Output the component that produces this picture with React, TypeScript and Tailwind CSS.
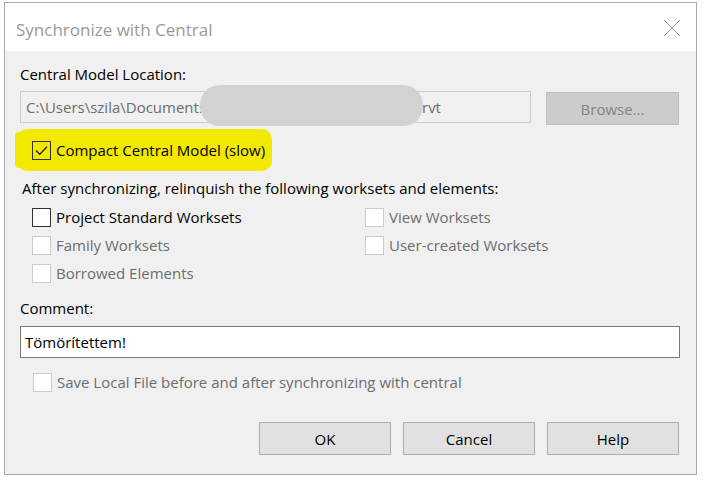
import React from 'react';

const font = { fontFamily: '"Open Sans", "Noto Sans", Arial, sans-serif' };

const CheckBox = ({ checked = false, disabled = false }: { checked?: boolean; disabled?: boolean }) => (
  <span
    className={`w-[19px] h-[19px] shrink-0 flex items-center justify-center border ${
      disabled ? 'border-[#cccccc] bg-white' : checked ? 'border-[#333333]' : 'border-[#333333] bg-white'
    }`}
  >
    {checked && (
      <svg width="15" height="15" viewBox="0 0 15 15">
        <path d="M2 7.5 L5.8 11.3 L13 3.8" fill="none" stroke="#222" strokeWidth="1.3" />
      </svg>
    )}
  </span>
);

const Option = ({ label, disabled = false }: { label: string; disabled?: boolean }) => (
  <div className="flex items-center gap-[5px] h-[20px]">
    <CheckBox disabled={disabled} />
    <span className={disabled ? 'text-[#6d6d6d]' : 'text-black'}>{label}</span>
  </div>
);

const Button = ({ label }: { label: string }) => (
  <button className="w-[132px] h-[33px] bg-[#e1e1e1] border border-[#adadad] text-black">{label}</button>
);

export default function App() {
  return (
    <div className="w-[703px] h-[481px] bg-white pl-[4px] pt-[2px]" style={font}>
      <div className="w-[693px] h-[473px] border border-[#a9a9a9] flex flex-col text-[15px] leading-[20px]">
        {/* title bar */}
        <div className="h-[48px] bg-white flex items-center justify-between pl-[11px] pr-[15px] shrink-0">
          <span className="text-[17px] text-[#999999] mb-[-6px]">Synchronize with Central</span>
          <svg width="18" height="18" viewBox="0 0 18 18" className="mb-[-2px]">
            <path d="M1 1 L17 17 M17 1 L1 17" stroke="#999" strokeWidth="1" />
          </svg>
        </div>

        <div className="flex-1 bg-[#f0f0f0] pl-[15px] pr-[17px] flex flex-col">
          <div className="mt-[13px] text-black">Central Model Location:</div>

          <div className="mt-[7px] flex items-start gap-[15px]">
            <div className="relative w-[511px] h-[32px] border border-[#cccccc] bg-[#f0f0f0] flex items-center pl-[5px] text-[#6d6d6d]">
              <span className="whitespace-nowrap">C:\Users\szila\Documents\</span>
              <span className="absolute left-[401px] top-0 bottom-0 flex items-center">rvt</span>
              {/* privacy scribble over the path */}
              <span className="absolute left-[179px] top-[-7px] w-[223px] h-[41px] bg-[#d1d2d3] rounded-[20px]" />
            </div>
            <button className="w-[133px] h-[33px] mt-[1px] bg-[#cccccc] border border-[#bfbfbf] text-[#838383]">
              Browse...
            </button>
          </div>

          <div className="relative mt-[15px] h-[20px] flex items-center gap-[5px] pl-[12px]">
            <span className="absolute left-[-3px] top-[-11px] w-[255px] h-[42px] bg-[#f3e800] rounded-[10px]" />
            <span className="absolute left-[-5px] top-[-8px] w-[8px] h-[36px] bg-[#f3e800] rounded-[4px]" />
            <span className="relative flex items-center gap-[5px]">
              <CheckBox checked />
              <span className="text-black">Compact Central Model (slow)</span>
            </span>
          </div>

          <div className="mt-[18px] pl-[2px] text-black">
            After synchronizing, relinquish the following worksets and elements:
          </div>

          <div className="mt-[9px] pl-[12px] grid grid-cols-[333px_1fr] gap-y-[8px]">
            <Option label="Project Standard Worksets" />
            <Option label="View Worksets" disabled />
            <Option label="Family Worksets" disabled />
            <Option label="User-created Worksets" disabled />
            <Option label="Borrowed Elements" disabled />
          </div>

          <div className="mt-[15px] text-black">Comment:</div>

          <div className="mt-[8px] w-[660px] h-[32px] border border-[#7a7a7a] bg-white flex items-center pl-[4px] text-black">
            Tömörítettem!
          </div>

          <div className="mt-[14px] pl-[13px]">
            <Option label="Save Local File before and after synchronizing with central" disabled />
          </div>

          <div className="mt-[30px] flex justify-end gap-[12px]">
            <Button label="OK" />
            <Button label="Cancel" />
            <Button label="Help" />
          </div>
        </div>
      </div>
    </div>
  );
}
